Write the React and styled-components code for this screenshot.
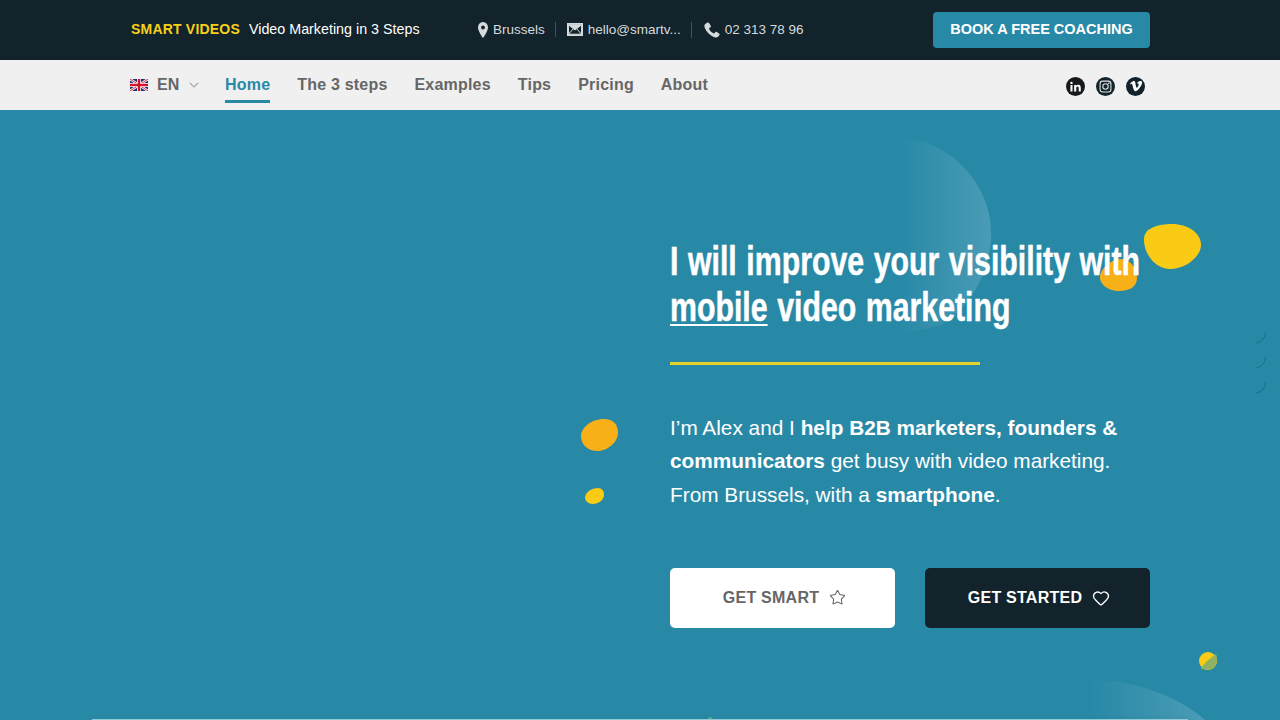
import React from "react";
import styled, { createGlobalStyle } from "styled-components";
import { Star, Heart, ChevronDown } from "lucide-react";

const Global = createGlobalStyle`
  html, body { margin: 0; padding: 0; height: 720px; overflow: hidden; background: #2889a7; }
  * { box-sizing: border-box; }
  body { font-family: "Liberation Sans", Arial, sans-serif; }
`;

const Page = styled.div`
  width: 1280px;
  height: 720px;
  overflow: hidden;
  display: flex;
  flex-direction: column;
`;
const TopBar = styled.header`
  height: 60px;
  flex: none;
  background: #12232b;
  padding: 0 130px 0 131px;
  display: flex;
  align-items: center;
`;
const Brand = styled.strong`
  color: #f8cf19;
  font-size: 14px;
  font-weight: 700;
  letter-spacing: 0.2px;
  margin: 0 9px 2px 0;
`;
const Tagline = styled.span`
  color: #fff;
  font-size: 14.3px;
  width: 229px;
  flex: none;
  margin-bottom: 2px;
`;
const Contacts = styled.div`
  display: flex;
  align-items: center;
  flex: 1;
  margin-bottom: 1px;
`;
const Contact = styled.span`
  display: inline-flex;
  align-items: center;
  gap: 5px;
  color: #d6dadc;
  font-size: 13.5px;
  & + & {
    border-left: 1px solid #41525a;
    margin-left: 10px;
    padding-left: 11px;
  }
`;
const Cta = styled.a`
  width: 217px;
  height: 36px;
  flex: none;
  border-radius: 4px;
  background: #2889a7;
  color: #fff;
  font-size: 14.5px;
  font-weight: 700;
  display: flex;
  align-items: center;
  justify-content: center;
  padding-bottom: 2px;
`;
const NavBar = styled.nav`
  height: 50px;
  flex: none;
  background: #f0f0f0;
  padding: 0 130px;
  display: flex;
  align-items: stretch;
`;
const Lang = styled.div`
  display: flex;
  align-items: center;
  gap: 9px;
  color: #666;
  font-size: 16px;
  font-weight: 700;
  width: 95px;
  flex: none;
  padding-bottom: 1px;
  svg:last-child { margin-left: -2px; }
`;
const Menu = styled.div`
  display: flex;
  gap: 27px;
  flex: 1;
`;
const MenuItem = styled.a`
  height: 43px;
  padding-top: 15px;
  color: ${p => (p.$active ? "#2889a7" : "#666")};
  border-bottom: 3px solid ${p => (p.$active ? "#2889a7" : "transparent")};
  font-size: 16px;
  font-weight: 700;
  line-height: 19px;
  letter-spacing: 0.2px;
`;
const Socials = styled.div`
  display: flex;
  align-items: center;
  gap: 11px;
  padding: 2px 5px 0 0;
`;
const Social = styled.span`
  width: 19px;
  height: 19px;
  border-radius: 50%;
  background: ${p => p.$bg || "#12232b"};
  display: flex;
  align-items: center;
  justify-content: center;
  color: #fff;
`;
const Hero = styled.main`
  flex: 1;
  position: relative;
  overflow: hidden;
  background: #2889a7;
  padding: 128px 130px 0 670px;
`;
const Title = styled.h1`
  margin: 0;
  position: relative;
  font-size: 40px;
  font-weight: 700;
  line-height: 46px;
  color: #fff;
  white-space: nowrap;
  word-spacing: 1.5px;
  transform: scaleX(0.757);
  transform-origin: left center;
  -webkit-text-stroke: 0.5px #fff;
  u { text-underline-offset: 3px; text-decoration-thickness: 2px; }
`;
const Rule = styled.div`
  position: relative;
  width: 310px;
  height: 3px;
  background: #e6d02f;
  margin: 32px 0 45.7px;
`;
const Lead = styled.p`
  margin: 0;
  position: relative;
  color: #fff;
  font-size: 20.8px;
  line-height: 33.8px;
  white-space: nowrap;
`;
const Buttons = styled.div`
  display: flex;
  gap: 30px;
  margin-top: 55.9px;
`;
const Button = styled.a`
  position: relative;
  width: 225px;
  height: 60px;
  border-radius: 5px;
  display: flex;
  align-items: center;
  justify-content: center;
  gap: 10px;
  font-size: 16px;
  font-weight: 700;
  letter-spacing: 0.25px;
  padding-left: ${p => (p.$dark ? "3px" : "4px")};
  background: ${p => (p.$dark ? "#12232b" : "#fff")};
  color: ${p => (p.$dark ? "#fff" : "#666")};
`;
const Deco = styled.svg`
  position: absolute;
  left: 0;
  top: 0;
  width: 1280px;
  height: 610px;
`;
const EdgeLine = styled.div`
  position: absolute;
  left: 92px;
  right: 92px;
  bottom: 0;
  height: 1px;
  background: #8fccd8;
  box-shadow: 0 -2px 3px rgba(0, 0, 0, 0.08);
`;

const Pin = () => (
  <svg width="10" height="16" viewBox="0 0 11 16" preserveAspectRatio="none"><path fill="#d6dadc" fillRule="evenodd" d="M5.5 0A5.4 5.4 0 0 0 0 5.4C0 9 5.5 16 5.5 16S11 9 11 5.4A5.4 5.4 0 0 0 5.5 0Zm0 3.4a2.1 2.1 0 1 1 0 4.2 2.1 2.1 0 0 1 0-4.2Z"/></svg>
);
const Mail = () => (
  <svg width="16" height="13" viewBox="0 0 16 13"><rect width="16" height="13" fill="#d6dadc"/><path d="M1.5 1.8h13v9.4h-13zM1.7 2l6.3 5 6.3-5M1.7 11l4.6-5.2M14.3 11 9.7 5.8" fill="#12232b" stroke="#d6dadc" strokeWidth="1"/></svg>
);
const Phone = () => (
  <svg width="17" height="16" viewBox="-1 0 17 16"><path fill="#d6dadc" d="M3.4.6 1.2 2C.3 2.700.2 4 .6 5.300 1.500 8.500 5.900 14 10.500 15.300c1.500.4 3 .1 3.800-.8l1.300-1.700c.3-.4.2-.8-.2-1.100l-2.900-1.900c-.4-.2-.8-.2-1.100.2l-.9 1.200c-.3.3-.6.3-1 .1C7.500 10.800 5.800 8.800 5.100 6.800c-.1-.4 0-.7.3-.9l1.200-.8c.4-.3.5-.7.3-1.100L5 .9C4.700.4 3.900.2 3.400.6Z"/></svg>
);
const Flag = () => (
  <svg width="18" height="12" viewBox="0 0 60 40">
    <rect width="60" height="40" fill="#1f2f7a"/>
    <path d="M0 0l60 40M60 0L0 40" stroke="#fff" strokeWidth="8"/>
    <path d="M0 0l60 40M60 0L0 40" stroke="#d0142c" strokeWidth="3"/>
    <path d="M30 0v40M0 20h60" stroke="#fff" strokeWidth="13"/>
    <path d="M30 0v40M0 20h60" stroke="#d0142c" strokeWidth="8"/>
  </svg>
);

export default function App() {
  return (
    <Page>
      <Global />
      <TopBar>
        <Brand>SMART VIDEOS</Brand>
        <Tagline>Video Marketing in 3 Steps</Tagline>
        <Contacts>
          <Contact><Pin />Brussels</Contact>
          <Contact><Mail />hello@smartv...</Contact>
          <Contact><Phone />02 313 78 96</Contact>
        </Contacts>
        <Cta>BOOK A FREE COACHING</Cta>
      </TopBar>
      <NavBar>
        <Lang><Flag />EN<ChevronDown size={16} color="#aaa" strokeWidth={1.6} /></Lang>
        <Menu>
          <MenuItem $active>Home</MenuItem>
          <MenuItem>The 3 steps</MenuItem>
          <MenuItem>Examples</MenuItem>
          <MenuItem>Tips</MenuItem>
          <MenuItem>Pricing</MenuItem>
          <MenuItem>About</MenuItem>
        </Menu>
        <Socials>
          <Social $bg="#161a1c">
            <svg width="11" height="11" viewBox="0 0 24 24" fill="#fff"><path d="M1 8.500h4.500V23H1zM3.250 1.500a2.600 2.600 0 1 1 0 5.200 2.600 2.600 0 0 1 0-5.200ZM9 8.500h4.300v2c.7-1.300 2.300-2.400 4.600-2.400 4.700 0 5.600 3 5.600 7V23H19v-7c0-1.800 0-3.900-2.400-3.900s-2.900 1.900-2.900 3.800V23H9z"/></svg>
          </Social>
          <Social>
            <svg width="13" height="13" viewBox="0 0 24 24" fill="none" stroke="#dfe3e5" strokeWidth="2"><rect x="2" y="2" width="20" height="20" rx="5"/><circle cx="12" cy="12" r="5"/><circle cx="18" cy="6" r=".6" fill="#dfe3e5"/></svg>
          </Social>
          <Social>
            <svg width="12" height="12" viewBox="0 0 24 24" fill="#fff"><path d="M23.900 6.600c-.1 2.300-1.700 5.500-4.900 9.600-3.300 4.300-6 6.400-8.300 6.400-1.400 0-2.600-1.300-3.600-3.900L5.200 11.600c-.7-2.600-1.500-3.900-2.300-3.900-.2 0-.8.400-1.900 1.100L0 7.400c1.200-1 2.400-2.100 3.600-3.200C5.200 2.800 6.400 2.100 7.200 2c1.900-.2 3.100 1.100 3.500 3.900.5 3 .8 4.900 1 5.600.6 2.500 1.200 3.800 1.900 3.800.5 0 1.300-.8 2.300-2.400s1.600-2.900 1.600-3.700c.1-1.400-.4-2.100-1.600-2.100-.6 0-1.200.1-1.800.4 1.200-3.900 3.500-5.800 6.900-5.700 2.500.1 3.700 1.700 3.600 4.800Z"/></svg>
          </Social>
        </Socials>
      </NavBar>
      <Hero>
        <Deco viewBox="0 110 1280 610">
          <defs>
            <linearGradient id="fade" x1="0" x2="1" y1="0" y2="0">
              <stop offset="0" stopColor="#fff" stopOpacity="0"/>
              <stop offset="1" stopColor="#fff" stopOpacity=".16"/>
            </linearGradient>
          </defs>
          <path fill="url(#fade)" d="M900 138c50 2 91 46 91 95 0 38-19 72-50 92l-41 10Z"/>
          <path fill="url(#fade)" d="M1090 680c42 0 85 14 115 40h-115Z"/>
          <path fill="#f9cb15" d="M1144 238c1-10 14-14 28-14 16 0 29 9 29 21 0 12-16 24-31 24-15 0-27-16-26-31Z"/>
          <path fill="#f8b018" d="M1100 276c1-8 12-17 21-17 9 0 16 9 16 19 0 9-8 13-18 13-11 0-20-7-19-15Z"/>
          <path fill="#f8b018" d="M581 436c0-8 10-17 23-17 9 0 14 5 14 14 0 9-11 18-20 18-10 0-17-6-17-15Z"/>
          <path fill="#f9cb15" d="M585 497c1-6 8-9 13-9 4 0 6 3 6 7 0 5-6 9-11 9-5 0-8-3-8-7Z"/>
          <circle cx="1208" cy="661" r="9" fill="#f9cb15"/>
          <path fill="#8fb163" d="M1216 654c2 5 1 11-3 14-3 2-7 2-11 1-1-1-1-1-1-1l6-7Z"/>
          <circle cx="710" cy="719" r="2" fill="#5fb08a"/>
          <path d="M1265 332c1 5-3 10-9 11M1265 357c1 5-3 10-9 11M1265 382c1 5-3 10-9 11" fill="none" stroke="#1c6d8c" strokeWidth="1"/>
        </Deco>
        <Title>I will improve your visibility with<br /><u>mobile</u> video marketing</Title>
        <Rule />
        <Lead>I’m Alex and I <b>help B2B marketers, founders &amp;<br />communicators</b> get busy with video marketing.<br />From Brussels, with a <b>smartphone</b>.</Lead>
        <Buttons>
          <Button>GET SMART<Star size={17} strokeWidth={1.5} /></Button>
          <Button $dark>GET STARTED<Heart size={18} strokeWidth={1.8} /></Button>
        </Buttons>
        <EdgeLine />
      </Hero>
    </Page>
  );
}
